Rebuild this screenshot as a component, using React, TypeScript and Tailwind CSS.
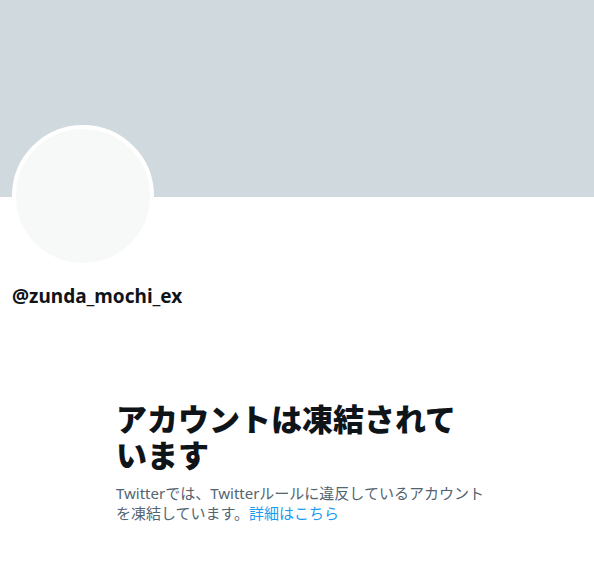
export default function App() {
  return (
    <div
      className="min-h-[572px] w-full bg-white"
      style={{ fontFamily: '"Noto Sans", "Noto Sans CJK JP", sans-serif' }}
    >
      {/* banner */}
      <div className="h-[197px] w-full bg-[#cfd9de]" />

      <div className="px-[12px]">
        <div className="-mt-[72px] h-[142px] w-[142px] rounded-full border-[4px] border-white bg-[#f7f9f9]" />
        <div className="mt-[17px] text-[19px] font-bold leading-[24px] text-[#0f1419]">
          @zunda_mochi_ex
        </div>
      </div>

      <div className="mx-auto mt-[93px] w-[362px]">
        <h2 className="text-[31px] font-extrabold leading-[36px] text-[#0f1419]">
          アカウントは凍結されています
        </h2>
        <p className="mt-[10px] w-[372px] text-[15px] leading-[20px] text-[#536471]">
          Twitterでは、Twitterルールに違反しているアカウントを凍結しています。
          <span className="text-[#1d9bf0]">詳細はこちら</span>
        </p>
      </div>
    </div>
  );
}
